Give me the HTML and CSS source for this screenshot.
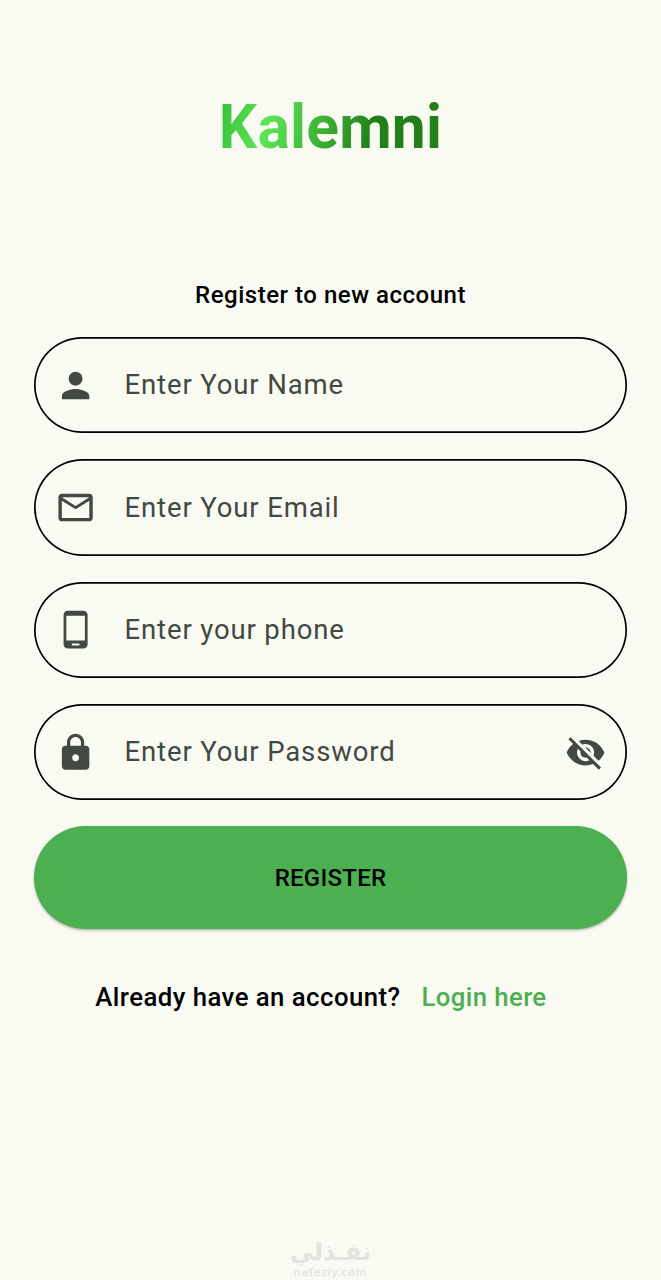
FILE: index.html
```html
<!DOCTYPE html>
<html lang="en">
<head>
<meta charset="utf-8">
<title>Kalemni</title>
<link rel="stylesheet" href="styles.css">
</head>
<body>
<main class="screen">
  <h1 class="brand"><span class="brand-text">Kalemni</span></h1>
  <h2 class="subtitle">Register to new account</h2>
  <div class="form">
    <div class="field">
      <svg class="icon" viewBox="0 0 24 24"><path d="M12 12c2.21 0 4-1.79 4-4s-1.79-4-4-4-4 1.79-4 4 1.790 4 4 4zm0 2c-2.670 0-8 1.340-8 4v2h16v-2c0-2.660-5.330-4-8-4z"/></svg>
      <span class="hint">Enter Your Name</span>
    </div>
    <div class="field">
      <svg class="icon" viewBox="0 0 24 24"><path d="M20 4H4c-1.100 0-1.990.9-1.990 2L2 18c0 1.100.9 2 2 2h16c1.100 0 2-.9 2-2V6c0-1.100-.9-2-2-2zm0 14H4V8l8 5 8-5v10zm-8-7L4 6h16l-8 5z"/></svg>
      <span class="hint">Enter Your Email</span>
    </div>
    <div class="field">
      <svg class="icon" viewBox="0 0 24 24"><path d="M16.500 1h-9C6.120 1 5 2.120 5 3.500v17C5 21.880 6.120 23 7.500 23h9c1.380 0 2.500-1.120 2.500-2.500v-17C19 2.120 17.880 1 16.500 1zM14.200 21.300H9.800v-1.200h4.400v1.200zM17.400 18.300H6.600V4h10.800v14.300z"/></svg>
      <span class="hint">Enter your phone</span>
    </div>
    <div class="field">
      <svg class="icon" viewBox="0 0 24 24"><path d="M18 8h-1V6c0-2.760-2.240-5-5-5S7 3.240 7 6v2H6c-1.100 0-2 .9-2 2v10c0 1.100.9 2 2 2h12c1.100 0 2-.9 2-2V10c0-1.100-.9-2-2-2zm-6 9c-1.100 0-2-.9-2-2s.9-2 2-2 2 .9 2 2-.9 2-2 2zm3.100-9H8.900V6c0-1.710 1.390-3.100 3.100-3.100s3.100 1.390 3.100 3.100v2z"/></svg>
      <span class="hint">Enter Your Password</span>
      <svg class="icon" viewBox="0 0 24 24"><path d="M12 7c2.760 0 5 2.240 5 5 0 .65-.13 1.260-.36 1.830l2.920 2.920c1.510-1.260 2.700-2.890 3.430-4.750-1.730-4.390-6-7.500-11-7.500-1.400 0-2.740.25-3.980.7l2.160 2.160C10.740 7.130 11.350 7 12 7zM2 4.270l2.280 2.280.46.46C3.080 8.300 1.780 10.020 1 12c1.730 4.390 6 7.500 11 7.500 1.550 0 3.030-.3 4.380-.84l.42.42L19.730 22 21 20.730 3.270 3 2 4.270zM7.530 9.800l1.550 1.550c-.05.21-.08.43-.08.65 0 1.660 1.340 3 3 3 .22 0 .44-.03.65-.08l1.550 1.550c-.67.33-1.410.53-2.200.53-2.760 0-5-2.240-5-5 0-.79.2-1.530.53-2.200zm4.310-.78l3.150 3.150.02-.16c0-1.660-1.340-3-3-3l-.17.01z"/></svg>
    </div>
    <button class="submit">REGISTER</button>
  </div>
  <p class="login"><span class="question">Already have an account?</span><a class="link">Login here</a></p>
  <footer class="mark">
    <span class="mark-ar" lang="ar" dir="rtl">نفـذلي</span>
    <span class="mark-en">nafezly.com</span>
  </footer>
</main>
</body>
</html>
```
FILE: styles.css
```css
* { box-sizing: border-box; }

body {
  margin: 0;
  background: #f9fbf3;
  color: #000;
  font-family: Roboto, "Liberation Sans", sans-serif;
}

.screen {
  display: flex;
  flex-direction: column;
  height: 1280px;
  padding: 93px 34.300px 0;
  overflow: hidden;
}

.brand {
  margin: 0;
  font-size: 60.500px;
  font-weight: 700;
  line-height: 70px;
  letter-spacing: 0.2px;
  text-align: center;
}

.brand-text {
  display: inline-block;
  background: linear-gradient(105deg, #35bd38 0%, #5ce656 23%, #228018 68%, #228018 100%);
  background-clip: text;
  -webkit-background-clip: text;
  color: transparent;
}

.subtitle {
  margin: 117px 0 0;
  font-size: 24px;
  font-weight: 500;
  line-height: 30px;
  letter-spacing: 0.52px;
  text-align: center;
}

.form {
  display: flex;
  flex-direction: column;
  gap: 26px;
  margin-top: 27.200px;
}

.field {
  display: flex;
  align-items: center;
  height: 96.300px;
  padding: 0 20.800px;
  border-radius: 49px;
  box-shadow: inset 0 0 0 1.700px #000;
}

.icon {
  flex: none;
  width: 41.200px;
  height: 41.200px;
  fill: #424940;
}

.hint {
  flex: 1;
  margin-left: 28.300px;
  color: #424940;
  font-size: 27.500px;
  line-height: 40px;
  letter-spacing: 0.86px;
}

.submit {
  height: 103px;
  border: 0;
  border-radius: 52px;
  background: #4caf50;
  box-shadow: 0 1.500px 2.500px rgba(0, 0, 0, 0.28);
  color: #000;
  font: 500 24px/30px Roboto, "Liberation Sans", sans-serif;
  letter-spacing: 0.25px;
}

.login {
  display: flex;
  gap: 21px;
  margin: 52px 0 0 61px;
  font-size: 25.750px;
  font-weight: 500;
  line-height: 32px;
  letter-spacing: 0.46px;
  white-space: nowrap;
}

.link {
  color: #4caf50;
  letter-spacing: 0.38px;
}

.mark {
  display: flex;
  flex-direction: column;
  align-items: center;
  margin-top: auto;
  color: #e2e4de;
  font-weight: 700;
}

.mark-ar {
  font-family: "DejaVu Sans", sans-serif;
  font-size: 24px;
  line-height: 28px;
}

.mark-en {
  font-family: "DejaVu Sans", sans-serif;
  font-size: 11px;
  font-weight: 400;
  line-height: 14px;
  letter-spacing: 0.75px;
  -webkit-text-stroke: 0.4px #e2e4de;
}
```
